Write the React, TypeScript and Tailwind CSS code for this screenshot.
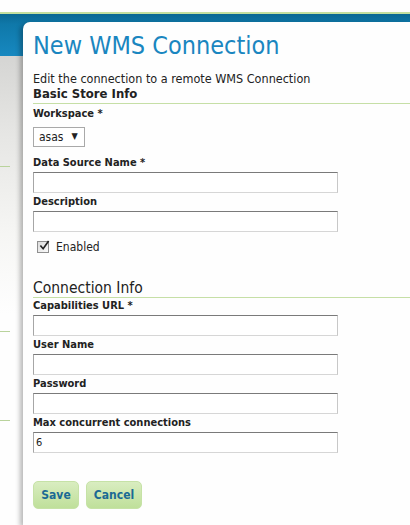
const font = "font-['DejaVu_Sans_Condensed','DejaVu_Sans',sans-serif]";

function Field({ label, value, mt = 'mt-[2px]' }: { label: string; value?: string; mt?: string }) {
  return (
    <div className={`${mt} flex flex-col`}>
      <label className="text-[11px] leading-[14px] font-bold text-[#222]">{label}</label>
      <input
        defaultValue={value}
        className="mt-[2px] w-[305px] h-[21px] border border-t-[#7a7a7a] border-l-[#a6a6a6] border-r-[#c8c8c8] border-b-[#d6d6d6] bg-white px-[2px] text-[11px] text-[#222] outline-none"
      />
    </div>
  );
}

function Heading({ children, bold }: { children: string; bold?: boolean }) {
  return (
    <div className="border-b border-[#c6dfa6] pb-[1px]">
      <h2 className={`leading-[16px] text-[#222] ${bold ? 'font-bold text-[13px]' : 'font-normal text-[15.5px]'}`}>
        {children}
      </h2>
    </div>
  );
}

export default function App() {
  return (
    <div className={`${font} w-[410px] h-[525px] overflow-hidden bg-[#fefefe] flex flex-col`}>
      <div className="h-[12px] shrink-0" />
      <div className="h-[2px] shrink-0 bg-[#c3df9f]" />
      <div className="flex flex-1 bg-[linear-gradient(to_bottom,#0a6893_0px,#0f78a9_10px,#1788c0_42px,#d5d5d3_42px,#e6e6e4_120px,#f6f6f4_220px,#fefefe_300px)]">
        <div className="w-[23px] shrink-0 flex flex-col">
          <div className="mt-[152px] w-[10px] h-px bg-[#b9d39c]" />
          <div className="mt-[164px] w-[10px] h-px bg-[#b9d39c]" />
          <div className="mt-[88px] w-[10px] h-px bg-[#b9d39c]" />
        </div>
        <div className="flex-1 mt-[8px] bg-[#fefefe] rounded-tl-[7px] shadow-[-3px_2px_5px_rgba(0,0,0,0.28)] pl-[10px] flex flex-col">
          <h1 className="mt-[9px] text-[25px] leading-[30px] font-normal text-[#1a86c0]">New WMS Connection</h1>
          <p className="mt-[10px] text-[12.5px] leading-[15px] text-[#222]">Edit the connection to a remote WMS Connection</p>
          <Heading bold>Basic Store Info</Heading>
          <div className="mt-[3px] flex flex-col">
            <label className="text-[11px] leading-[14px] font-bold text-[#222]">Workspace *</label>
            <div className="mt-[6px] w-[52px] h-[20px] border border-[#a9a9a9] bg-white flex items-center pl-[5px] gap-[8px] text-[12px] text-[#222]">
              <span>asas</span>
              <span className="text-[9px]">▼</span>
            </div>
          </div>
          <Field label="Data Source Name *" mt="mt-[9px]" />
          <Field label="Description" />
          <div className="mt-[6px] pl-[4px] flex items-center gap-[7px]">
            <span className="relative w-[12px] h-[12px] border border-[#8f8f8f] bg-[linear-gradient(to_bottom_right,#dcdcdc,#fafafa)]">
              <svg viewBox="0 0 12 12" className="absolute left-[1px] -top-[2px] w-[11px] h-[11px]">
                <path d="M1.5 6 L4.5 9.5 L10.5 1" fill="none" stroke="#222" strokeWidth="1.8" />
              </svg>
            </span>
            <span className="text-[12px] text-[#222]">Enabled</span>
          </div>
          <div className="mt-[24px]">
            <Heading>Connection Info</Heading>
          </div>
          <Field label="Capabilities URL *" mt="mt-[1px]" />
          <Field label="User Name" />
          <Field label="Password" />
          <Field label="Max concurrent connections" value="6" />
          <div className="mt-[28px] flex gap-[7px]">
            <button className="w-[46px] h-[28px] rounded-[5px] border border-[#c6e2a6] bg-[linear-gradient(to_bottom,#d9edc0,#bfe09a)] text-[12px] font-bold text-[#1b6a94]">Save</button>
            <button className="w-[56px] h-[28px] rounded-[5px] border border-[#c6e2a6] bg-[linear-gradient(to_bottom,#d9edc0,#bfe09a)] text-[12px] font-bold text-[#1b6a94]">Cancel</button>
          </div>
        </div>
      </div>
    </div>
  );
}
